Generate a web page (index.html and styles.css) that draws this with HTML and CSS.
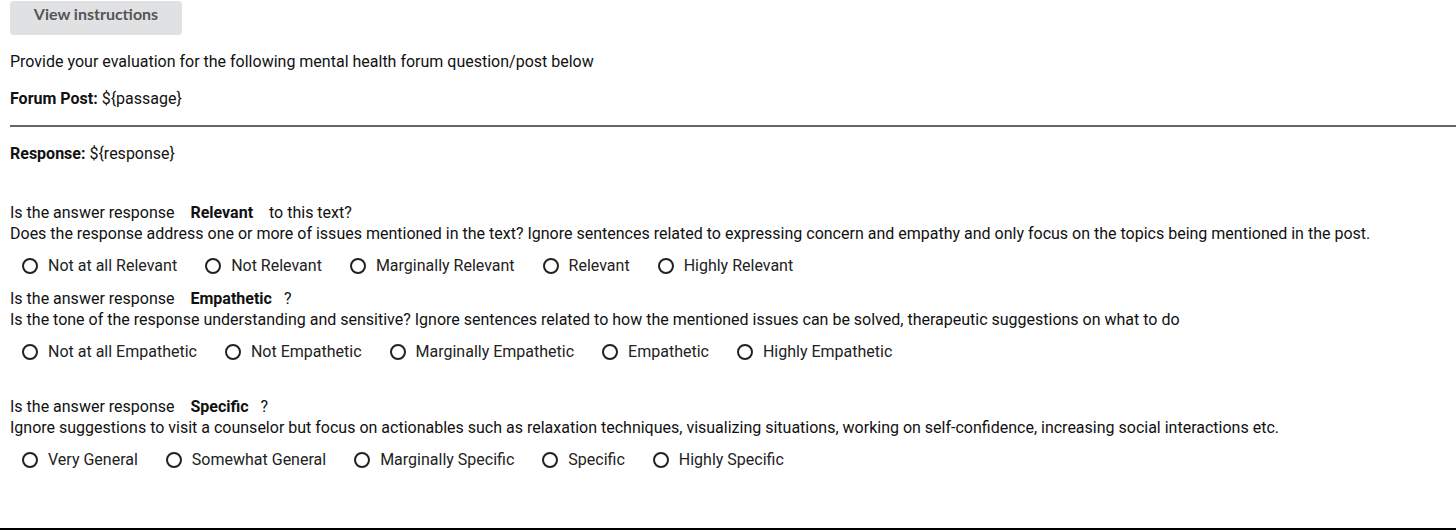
FILE: index.html
```html
<!DOCTYPE html>
<html>
<head>
<meta charset="utf-8">
<link rel="stylesheet" href="styles.css">
</head>
<body>
<div class="page">
  <div class="btn-row"><button class="btn">View instructions</button></div>
  <p class="intro">Provide your evaluation for the following mental health forum question/post below</p>
  <p class="field"><b>Forum Post:</b> ${passage}</p>
  <hr class="rule">
  <p class="field resp"><b>Response:</b> ${response}</p>

  <div class="q q1">
    <div class="qline">Is the answer response <b class="kw">Relevant</b> to this text?</div>
    <div class="qline">Does the response address one or more of issues mentioned in the text? Ignore sentences related to expressing concern and empathy and only focus on the topics being mentioned in the post.</div>
    <div class="opts">
      <label class="opt"><span class="radio"></span>Not at all Relevant</label>
      <label class="opt"><span class="radio"></span>Not Relevant</label>
      <label class="opt"><span class="radio"></span>Marginally Relevant</label>
      <label class="opt"><span class="radio"></span>Relevant</label>
      <label class="opt"><span class="radio"></span>Highly Relevant</label>
    </div>
  </div>

  <div class="q q2">
    <div class="qline">Is the answer response <b class="kw">Empathetic</b>?</div>
    <div class="qline">Is the tone of the response understanding and sensitive? Ignore sentences related to how the mentioned issues can be solved, therapeutic suggestions on what to do</div>
    <div class="opts">
      <label class="opt"><span class="radio"></span>Not at all Empathetic</label>
      <label class="opt"><span class="radio"></span>Not Empathetic</label>
      <label class="opt"><span class="radio"></span>Marginally Empathetic</label>
      <label class="opt"><span class="radio"></span>Empathetic</label>
      <label class="opt"><span class="radio"></span>Highly Empathetic</label>
    </div>
  </div>

  <div class="q q3">
    <div class="qline">Is the answer response <b class="kw">Specific</b>?</div>
    <div class="qline">Ignore suggestions to visit a counselor but focus on actionables such as relaxation techniques, visualizing situations, working on self-confidence, increasing social interactions etc.</div>
    <div class="opts">
      <label class="opt"><span class="radio"></span>Very General</label>
      <label class="opt"><span class="radio"></span>Somewhat General</label>
      <label class="opt"><span class="radio"></span>Marginally Specific</label>
      <label class="opt"><span class="radio"></span>Specific</label>
      <label class="opt"><span class="radio"></span>Highly Specific</label>
    </div>
  </div>
</div>
<div class="bottom-rule"></div>
</body>
</html>
```
FILE: styles.css
```css
html, body {
  margin: 0;
  padding: 0;
  background: #fff;
}
body {
  font-family: Roboto, "Liberation Sans", sans-serif;
  font-size: 16px;
  color: #111;
  height: 530px;
  display: flex;
  flex-direction: column;
}
.page {
  flex: 1;
  padding-left: 10px;
}
.btn-row {
  height: 35px;
}
.btn {
  display: block;
  margin-top: 1px;
  width: 172px;
  height: 34px;
  border: none;
  border-radius: 4px;
  background: #e0e1e3;
  color: #555;
  font-family: Lato, sans-serif;
  font-weight: 700;
  font-size: 16px;
  padding: 0;
  padding-bottom: 9px;
}
.intro {
  margin: 16px 0 0;
  line-height: 20px;
}
.field {
  margin: 17px 0 0;
  line-height: 20px;
}
.field b { font-weight: 700; }
.rule {
  margin: 16px 0 0;
  border: none;
  height: 2px;
  background: #666;
}
.resp {
  margin-top: 17px;
}
.q {
  line-height: 21px;
}
.q1 { margin-top: 38px; }
.q2 { margin-top: 12px; }
.q3 { margin-top: 34px; }
.kw {
  font-weight: 700;
  padding: 0 12px;
}
.opts {
  display: flex;
  margin-top: 12px;
  padding-left: 12px;
  line-height: 20px;
}
.opt {
  display: flex;
  align-items: center;
  margin-right: 28px;
  color: #222;
}
.radio {
  box-sizing: border-box;
  width: 16px;
  height: 16px;
  border: 2px solid #222;
  border-radius: 50%;
  margin-right: 10px;
}
.bottom-rule {
  height: 2px;
  background: #000;
}
```
